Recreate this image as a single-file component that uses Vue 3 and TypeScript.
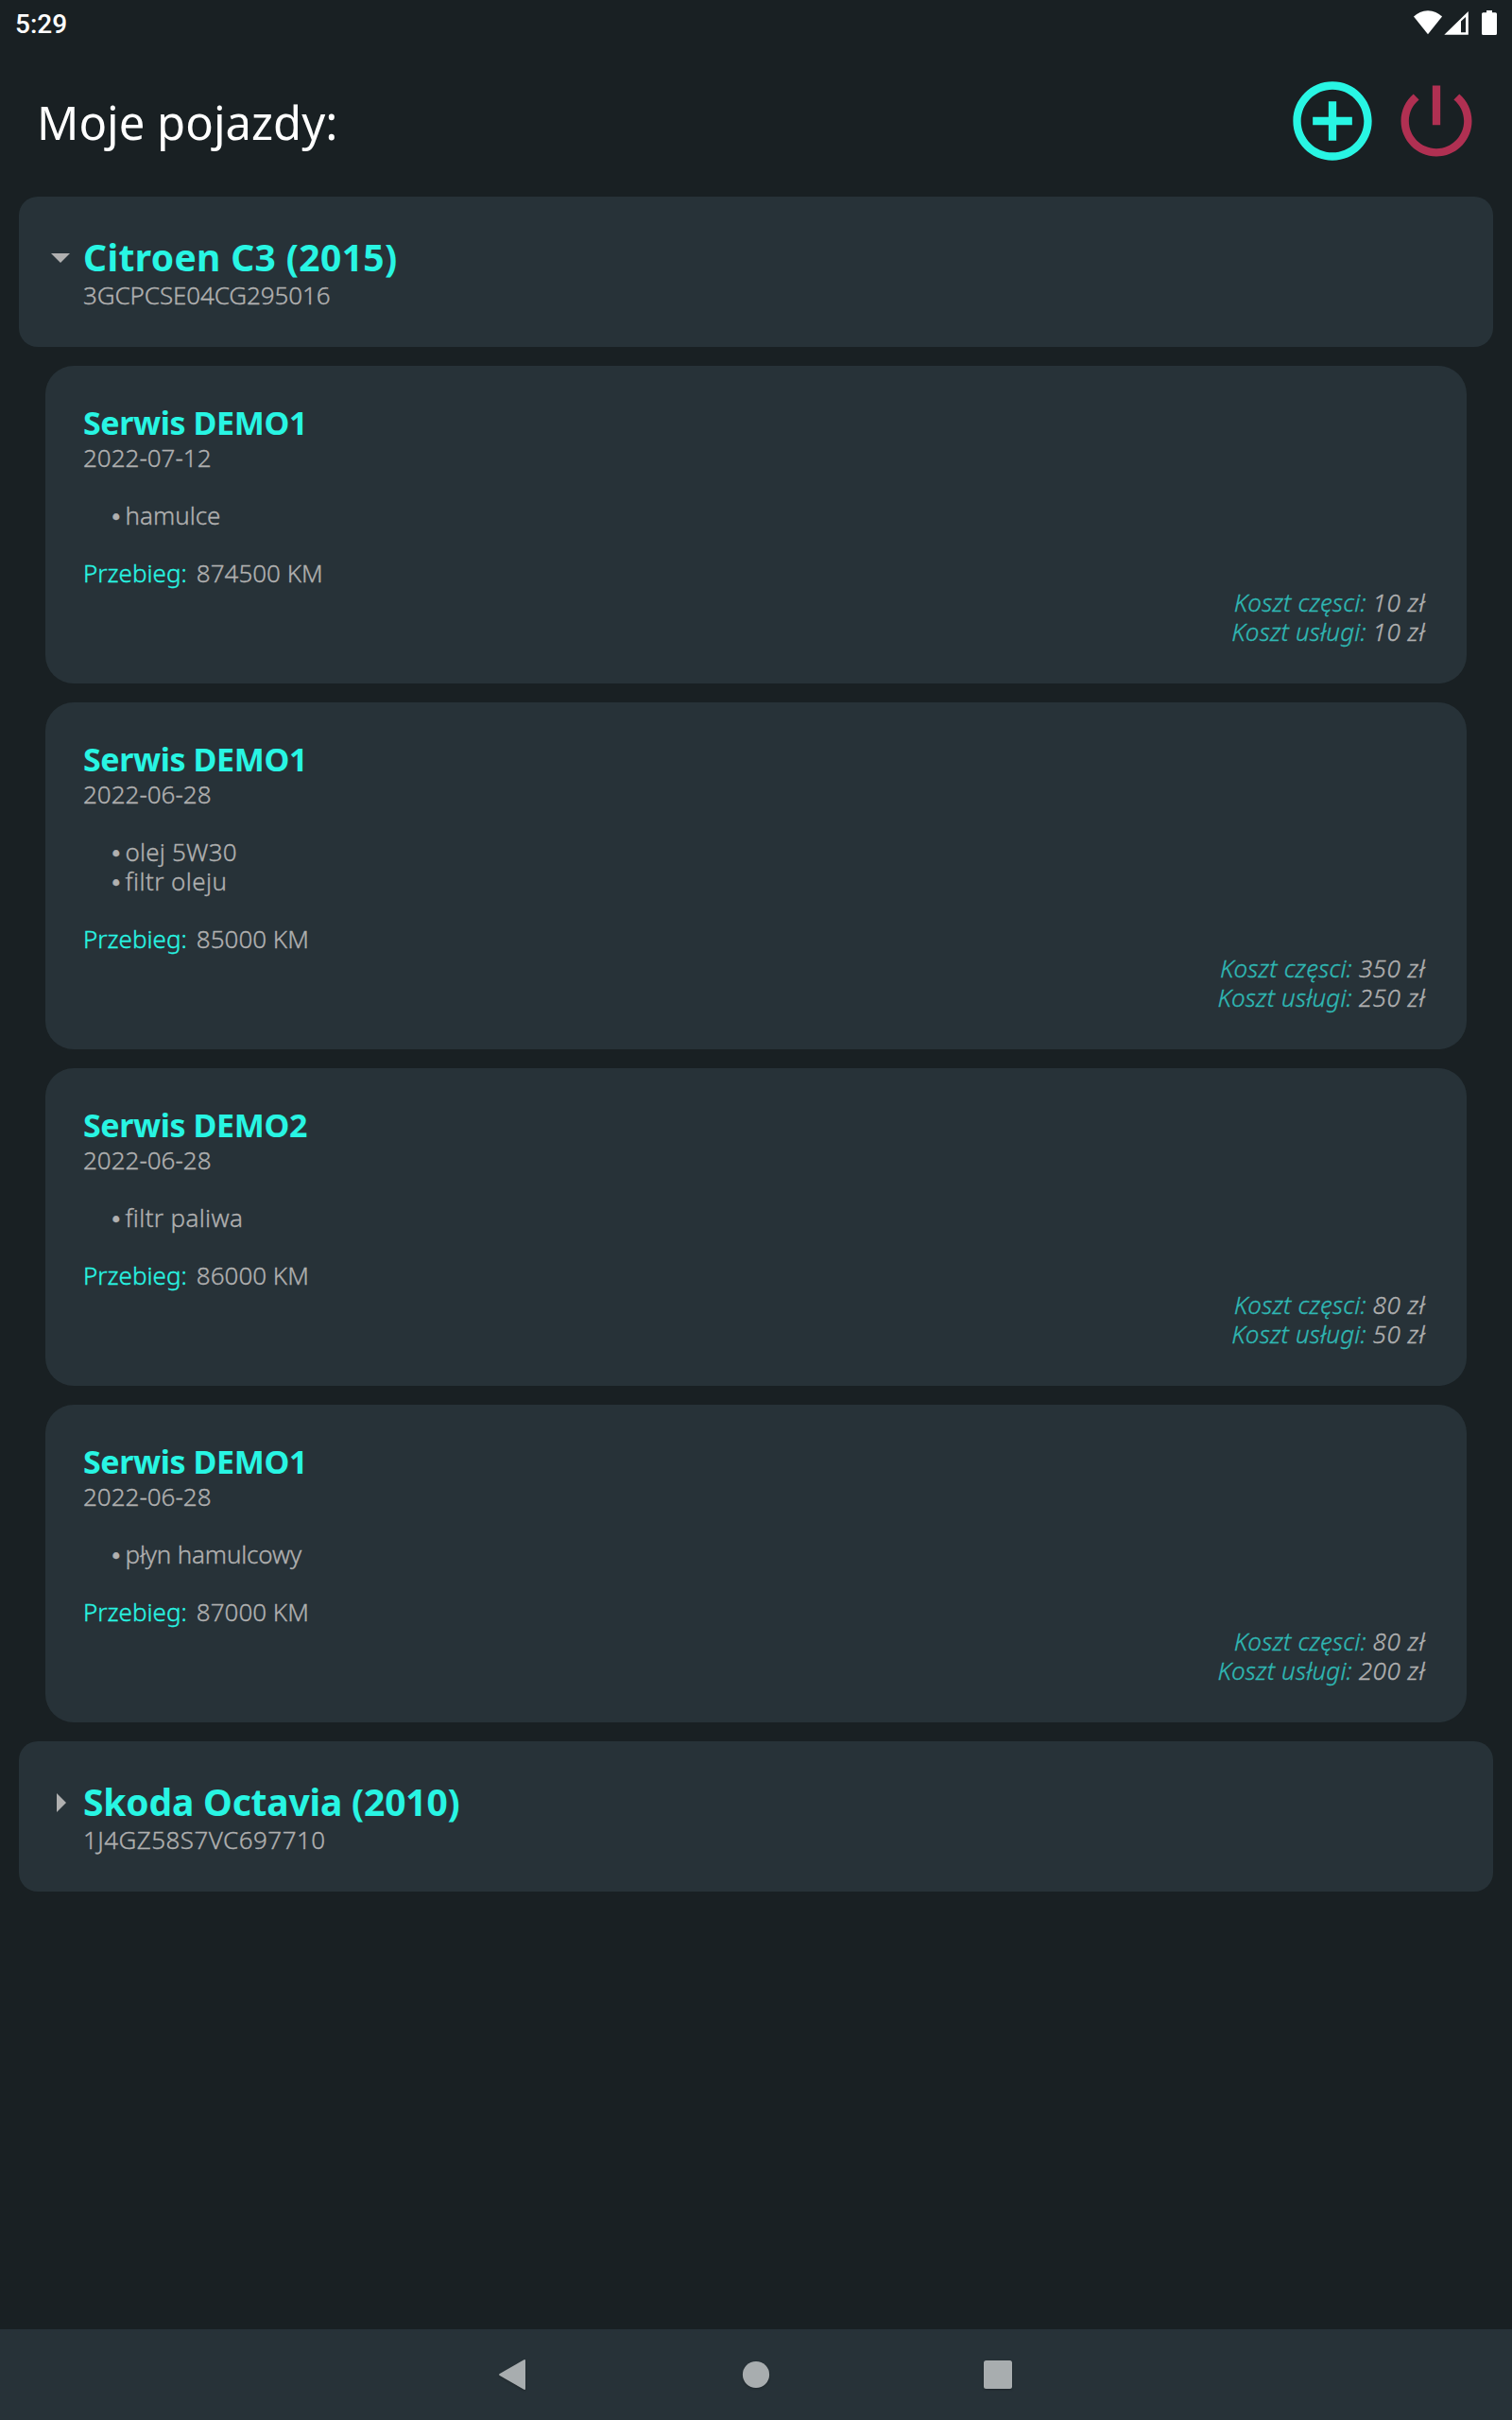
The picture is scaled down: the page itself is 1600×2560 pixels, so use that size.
<script setup lang="ts">
interface Part {
  name: string
  tracking: number
}

interface Service {
  workshop: string
  date: string
  parts: Part[]
  mileage: number
  partsCost: number
  labourCost: number
}

interface Vehicle {
  name: string
  nameTracking: number
  vin: string
  vinTracking: number
  open: boolean
  services: Service[]
}

const vehicles: Vehicle[] = [
  {
    name: 'Citroen C3 (2015)',
    nameTracking: 0.35,
    vin: '3GCPCSE04CG295016',
    vinTracking: -0.1,
    open: true,
    services: [
      {
        workshop: 'Serwis DEMO1',
        date: '2022-07-12',
        parts: [{ name: 'hamulce', tracking: 0 }],
        mileage: 874500,
        partsCost: 10,
        labourCost: 10,
      },
      {
        workshop: 'Serwis DEMO1',
        date: '2022-06-28',
        parts: [
          { name: 'olej 5W30', tracking: 0.2 },
          { name: 'filtr oleju', tracking: 0.43 },
        ],
        mileage: 85000,
        partsCost: 350,
        labourCost: 250,
      },
      {
        workshop: 'Serwis DEMO2',
        date: '2022-06-28',
        parts: [{ name: 'filtr paliwa', tracking: 0.34 }],
        mileage: 86000,
        partsCost: 80,
        labourCost: 50,
      },
      {
        workshop: 'Serwis DEMO1',
        date: '2022-06-28',
        parts: [{ name: 'płyn hamulcowy', tracking: -0.17 }],
        mileage: 87000,
        partsCost: 80,
        labourCost: 200,
      },
    ],
  },
  {
    name: 'Skoda Octavia (2010)',
    nameTracking: -0.2,
    vin: '1J4GZ58S7VC697710',
    vinTracking: 0.45,
    open: false,
    services: [],
  },
]
</script>

<template>
  <div class="screen">
    <div class="status-bar">
      <span class="clock">5:29</span>
      <svg class="status-icons" width="92" height="28" viewBox="0 0 92 28" fill="#fff">
        <path d="M0 7.6C4 3.7 9 1.3 15 1.3s11 2.4 15 6.3L15 26.2z" />
        <path fill-rule="evenodd" d="M32.3 26.8 57.8 2v24.8zM50 12.6v11.6h5V8z" />
        <path d="M77 1h6v2.3h3.5q1.500 0 1.500 1.500v20.700q0 1.500-1.500 1.500h-13q-1.500 0-1.500-1.500V4.800q0-1.500 1.500-1.500H77z" />
      </svg>
    </div>

    <header class="header">
      <h1 class="title">Moje pojazdy:</h1>
      <div class="actions">
        <svg class="add" width="100" height="100" viewBox="0 0 24 24">
          <path
            d="M13 7h-2v4H7v2h4v4h2v-4h4v-2h-4V7zm-1-5C6.480 2 2 6.480 2 12s4.480 10 10 10 10-4.480 10-10S17.520 2 12 2zm0 18c-4.410 0-8-3.590-8-8s3.590-8 8-8 8 3.590 8 8-3.590 8-8 8z"
          />
        </svg>
        <svg class="power" width="100" height="100" viewBox="0 0 24 24">
          <path
            d="M13 3h-2v10h2V3zm4.830 2.170l-1.420 1.420C17.990 7.860 19 9.810 19 12c0 3.870-3.130 7-7 7s-7-3.130-7-7c0-2.190 1.010-4.140 2.580-5.420L6.170 5.170C4.230 6.820 3 9.260 3 12c0 4.970 4.030 9 9 9s9-4.030 9-9c0-2.740-1.230-5.180-3.170-6.830z"
          />
        </svg>
      </div>
    </header>

    <main class="list">
      <template v-for="vehicle in vehicles" :key="vehicle.vin">
        <section class="vehicle">
          <svg class="arrow" width="20" height="20" viewBox="0 0 20 20">
            <path v-if="vehicle.open" d="M0 5h20L10 15z" />
            <path v-else d="M6 0v20l10-10z" />
          </svg>
          <div>
            <h2 class="vehicle-name" :style="{ letterSpacing: vehicle.nameTracking + 'px' }">{{ vehicle.name }}</h2>
            <p class="row" :style="{ letterSpacing: vehicle.vinTracking + 'px' }">{{ vehicle.vin }}</p>
          </div>
        </section>

        <article v-for="(service, i) in vehicle.services" :key="i" class="service">
          <h3 class="workshop">{{ service.workshop }}</h3>
          <p class="row">{{ service.date }}</p>
          <ul class="parts">
            <li v-for="part in service.parts" :key="part.name" class="row part">
              <span class="bullet">•</span>
              <span :style="{ letterSpacing: part.tracking + 'px' }">{{ part.name }}</span>
            </li>
          </ul>
          <p class="row mileage"><span class="accent">Przebieg:</span><span>{{ service.mileage }} KM</span></p>
          <p class="row cost"><span class="cost-label">Koszt częsci: </span><span class="cost-value">{{ service.partsCost }} zł</span></p>
          <p class="row cost"><span class="cost-label">Koszt usługi: </span><span class="cost-value">{{ service.labourCost }} zł</span></p>
        </article>
      </template>
    </main>

    <nav class="nav-bar">
      <svg width="32" height="34" viewBox="0 0 32 34"><path d="M26.500 1.200q1.500-.800 1.500 1v29.600q0 1.800-1.500 1L.800 18q-1.500-1 0-2z" /></svg>
      <svg width="32" height="32" viewBox="0 0 32 32"><circle cx="16" cy="16" r="14.100" /></svg>
      <svg width="32" height="32" viewBox="0 0 32 32"><rect x="1" y="1" width="30" height="30" rx="2.500" /></svg>
    </nav>
  </div>
</template>

<style>
body {
  background: #192023;
}
</style>

<style scoped>
.screen {
  display: flex;
  flex-direction: column;
  width: 1600px;
  height: 2560px;
  background: #192023;
  color: #b0b0b0;
  font-family: 'Noto Sans', sans-serif;
}

h1,
h2,
h3,
p,
ul {
  margin: 0;
  padding: 0;
}

svg {
  display: block;
  flex: none;
}

.status-bar {
  display: flex;
  justify-content: space-between;
  align-items: flex-start;
  height: 48px;
  padding: 10px 12px 0 16px;
  box-sizing: border-box;
}

.clock {
  color: #fff;
  font: 500 28px/32px Roboto, sans-serif;
}

.header {
  display: flex;
  justify-content: space-between;
  height: 160px;
  padding: 30px 30px 0 39px;
  box-sizing: border-box;
}

.title {
  color: #fff;
  font-size: 49px;
  font-weight: 400;
  line-height: 103px;
}

.actions {
  display: flex;
  gap: 10px;
}

.add {
  fill: #28f5e3;
}

.power {
  fill: #b03052;
}

.list {
  flex: 1;
  display: flex;
  flex-direction: column;
  gap: 20px;
  padding: 0 20px;
}

.vehicle {
  display: flex;
  gap: 14px;
  height: 159px;
  padding: 40px 34px;
  box-sizing: border-box;
  border-radius: 20px;
  background: #273238;
}

.arrow {
  margin-top: 15px;
  fill: #b0b0b0;
}

.vehicle-name {
  margin-bottom: 1px;
  color: #28f5e3;
  font-size: 39px;
  font-weight: 700;
  line-height: 48px;
}

.service {
  margin: 0 28px;
  padding: 40px 44px 39px 40px;
  border-radius: 30px;
  background: #273238;
}

.workshop {
  margin-bottom: 1px;
  color: #28f5e3;
  font-size: 34px;
  font-weight: 700;
  line-height: 41px;
  letter-spacing: -0.4px;
}

.row {
  font-size: 26px;
  font-weight: 300;
  line-height: 31px;
  white-space: pre;
  -webkit-text-stroke: 0.35px currentColor;
}

.parts {
  margin: 30px 0 30px 28px;
  list-style: none;
}

.part {
  display: flex;
  align-items: baseline;
  height: 31px;
}

.bullet {
  width: 16.5px;
  font: 23px/20px 'DejaVu Sans', sans-serif;
}

.mileage {
  display: flex;
  gap: 10px;
}

.accent {
  color: #28f5e3;
}

.cost {
  text-align: right;
  font-style: italic;
  letter-spacing: 0.15px;
}

.cost-label {
  color: #2fb8b4;
}

.cost-value {
  letter-spacing: 0.5px;
}

.nav-bar {
  display: flex;
  justify-content: center;
  align-items: center;
  gap: 224px;
  height: 96px;
  background: #273238;
  fill: #a8adaf;
}

.nav-bar svg {
  filter: drop-shadow(0 1px 1px rgba(0, 0, 0, 0.25));
}
</style>
